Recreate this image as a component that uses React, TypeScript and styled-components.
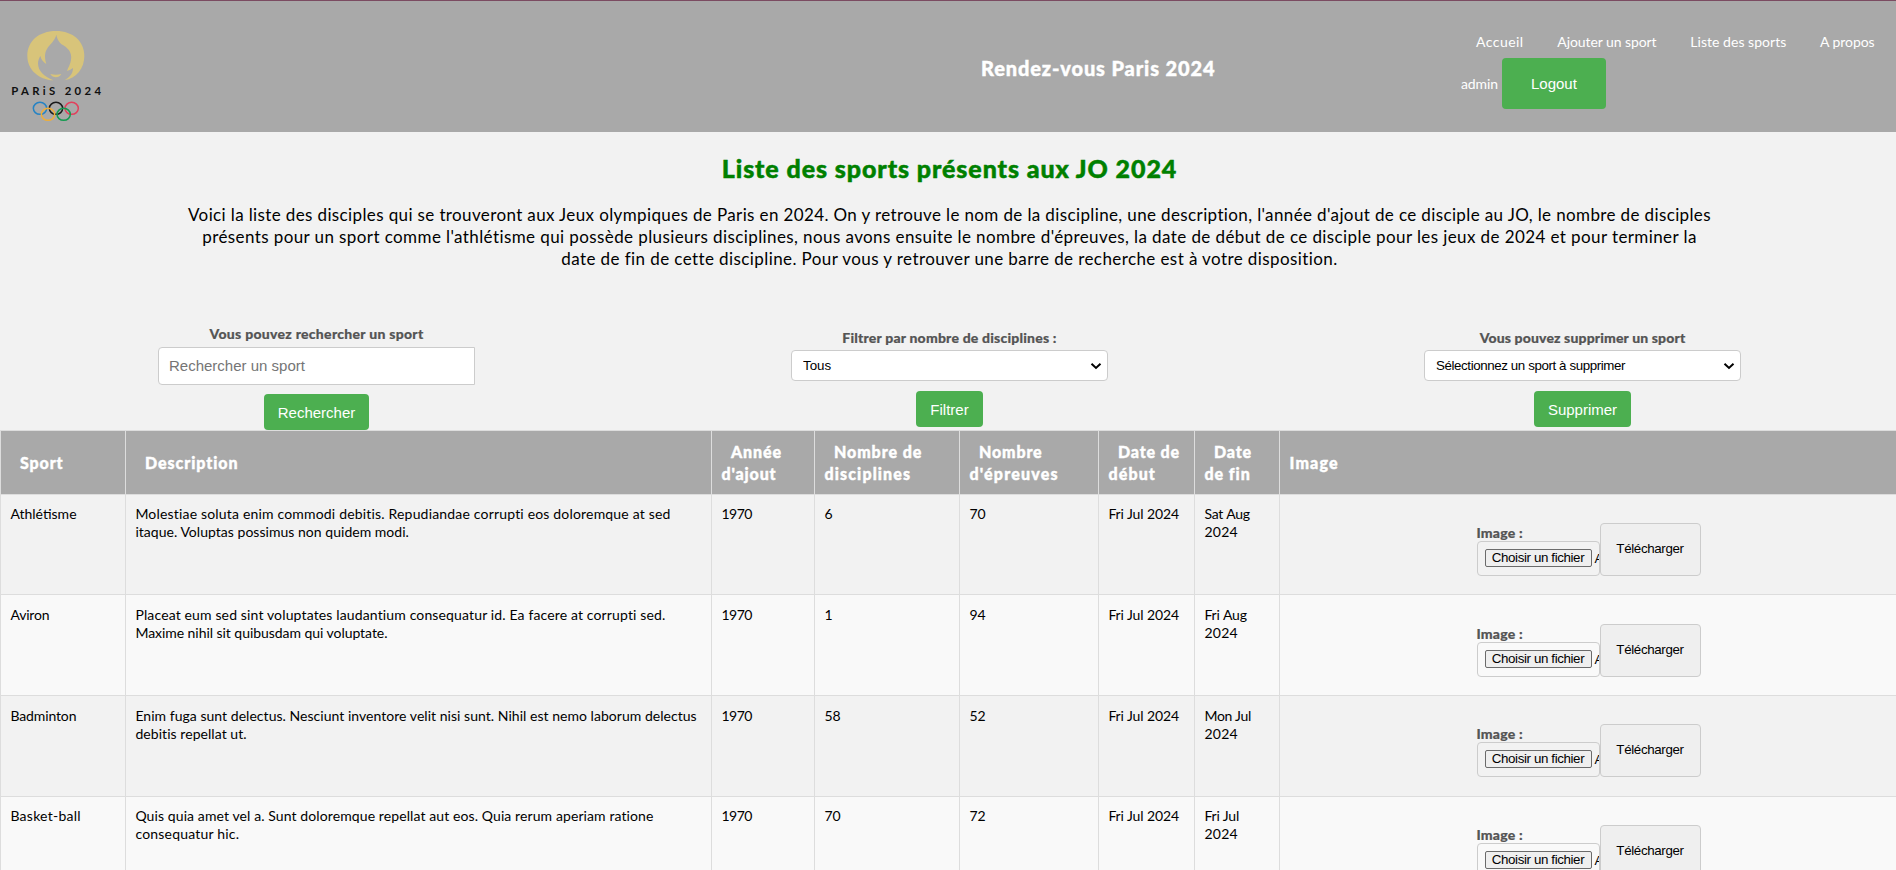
import React from "react";
import styled, { createGlobalStyle } from "styled-components";

const GlobalStyle = createGlobalStyle`
  *, *::before, *::after { box-sizing: border-box; }
  html, body { margin: 0; height: 870px; overflow: hidden; }
  body {
    background: #f2f2f2;
    color: #000;
    font-family: "Lato", "Open Sans", sans-serif;
    font-size: 14px;
    line-height: 18px;
  }
  button, input, select { font-family: Arial, "Liberation Sans", sans-serif; }
`;

const Text = styled.span<{ $ls?: number }>`
  letter-spacing: ${(p) => p.$ls ?? 0}px;
  white-space: nowrap;
`;

const Page = styled.div`
  width: 1899px;
  height: 870px;
  overflow: hidden;
`;

const Header = styled.header`
  display: grid;
  grid-template-columns: 981px 480px 1fr;
  height: 132px;
  background: #a9a9a9;
  border-top: 1px solid #7b4b61;
  color: #fff;
`;

const Logo = styled.svg`
  display: block;
  width: 130px;
  height: 131px;
`;

const Brand = styled.div`
  padding-top: 54px;
  font-size: 20px;
  font-weight: 900;
  line-height: 26px;
  -webkit-text-stroke: 0.4px currentColor;
`;

const Nav = styled.nav`
  padding-top: 32px;
`;

const NavLinks = styled.div`
  display: flex;
  gap: 33.8px;
  padding-left: 15px;
`;

const UserRow = styled.div`
  display: flex;
  align-items: center;
  gap: 4px;
  margin-top: 7px;
`;

const GreenButton = styled.button<{ $large?: boolean }>`
  height: ${(p) => (p.$large ? "51px" : "36px")};
  padding: 0 ${(p) => (p.$large ? "29px" : "14px")};
  border: 0;
  border-radius: 4px;
  background: #4caf50;
  color: #fff;
  font-size: 15px;
`;

const Title = styled.h1`
  margin: 21px 0;
  color: green;
  font-size: 25px;
  font-weight: 900;
  line-height: 30px;
  text-align: center;
  -webkit-text-stroke: 0.5px currentColor;
`;

const Intro = styled.p`
  display: flex;
  flex-direction: column;
  align-items: center;
  margin: 0;
  font-size: 17px;
  line-height: 22px;
`;

const Forms = styled.section`
  display: grid;
  grid-template-columns: repeat(3, 1fr);
  height: 160px;
`;

const Form = styled.div<{ $top: number }>`
  display: flex;
  flex-direction: column;
  align-items: center;
  padding-top: ${(p) => p.$top}px;
`;

const Label = styled.label`
  display: block;
  color: #555;
  font-size: 14px;
  font-weight: 900;
  -webkit-text-stroke: 0.2px currentColor;
`;

const SearchInput = styled.input`
  width: 317px;
  height: 38px;
  margin: 4px 0 9px;
  padding: 0 10px 2px;
  border: 1px solid #ccc;
  border-radius: 4px 0 0 4px;
  background: #fff;
  font-size: 15px;
  &::placeholder { color: #757575; }
`;

const SelectBox = styled.div`
  display: grid;
  align-items: center;
  width: 317px;
  margin: 3px 0 10px;
`;

const Select = styled.select<{ $ls?: number }>`
  grid-area: 1 / 1;
  width: 317px;
  height: 31px;
  padding: 0 24px 0 11px;
  appearance: none;
  border: 1px solid #ccc;
  border-radius: 4px;
  background: #fff;
  color: #000;
  font-size: 13.333px;
  letter-spacing: ${(p) => p.$ls ?? 0}px;
`;

const Chevron = styled.svg`
  grid-area: 1 / 1;
  justify-self: end;
  width: 12px;
  height: 8px;
  margin-right: 6px;
  pointer-events: none;
`;

const Table = styled.table`
  width: 1899px;
  table-layout: fixed;
  border-collapse: collapse;
`;

const HeadRow = styled.tr`
  height: 64px;
  background: #a9a9a9;
  color: #fff;
`;

const HeadCell = styled.th<{ $indent?: number }>`
  padding: 0 0 0 9.5px;
  border: 1px solid #ddd;
  font-size: 16px;
  font-weight: 900;
  line-height: 22px;
  text-align: left;
  text-indent: ${(p) => p.$indent ?? 9.5}px;
  -webkit-text-stroke: 0.4px currentColor;
`;

const Row = styled.tr<{ $height: number }>`
  height: ${(p) => p.$height}px;
  &:nth-child(even) { background: #f9f9f9; }
`;

const Cell = styled.td<{ $top: number }>`
  padding: ${(p) => p.$top}px 0 0 9.4px;
  border: 1px solid #ddd;
  vertical-align: top;
`;

const ImageCell = styled(Cell)`
  padding: ${(p) => p.$top}px 2px 0 0;
`;

const Upload = styled.div`
  display: flex;
  justify-content: center;
`;

const UploadField = styled.div`
  width: 123px;
`;

const UploadLabel = styled(Label)`
  height: 18px;
  line-height: 20px;
`;

const FileBox = styled.div`
  display: flex;
  align-items: center;
  gap: 3px;
  height: 35px;
  padding: 0 0 1px 7px;
  overflow: hidden;
  border: 1px solid #ccc;
  border-radius: 4px;
  font: 13.333px Arial, "Liberation Sans", sans-serif;
  white-space: nowrap;
`;

const FileButton = styled.button`
  flex: none;
  width: 107px;
  height: 18px;
  padding: 0;
  border: 1px solid #6b6b6b;
  border-radius: 2px;
  background: #efefef;
  color: #000;
  font-size: 13.333px;
  letter-spacing: -0.38px;
  line-height: 16px;
`;

const UploadButton = styled.button`
  width: 101px;
  height: 53px;
  padding: 0 0 2px;
  border: 1px solid #ccc;
  border-radius: 4px;
  background: #efefef;
  color: #000;
  font-size: 13.333px;
  letter-spacing: -0.35px;
`;

type Str = [string, number];

const INTRO: Str[] = [
  ["Voici la liste des disciples qui se trouveront aux Jeux olympiques de Paris en 2024. On y retrouve le nom de la discipline, une description, l'année d'ajout de ce disciple au JO, le nombre de disciples", 0.375],
  ["présents pour un sport comme l'athlétisme qui possède plusieurs disciplines, nous avons ensuite le nombre d'épreuves, la date de début de ce disciple pour les jeux de 2024 et pour terminer la", 0.405],
  ["date de fin de cette discipline. Pour vous y retrouver une barre de recherche est à votre disposition.", 0.41],
];

const LINKS: Str[] = [
  ["Accueil", 0.45],
  ["Ajouter un sport", -0.08],
  ["Liste des sports", 0.03],
  ["A propos", -0.063],
];

const COLUMNS: { width: number; lines: Str[]; indent?: number }[] = [
  { width: 125, lines: [["Sport", 0.876]] },
  { width: 586, lines: [["Description", 0.93]] },
  { width: 103, lines: [["Année", 0.896], ["d'ajout", 0.854]] },
  { width: 145, lines: [["Nombre de", 0.92], ["disciplines", 1.12]] },
  { width: 139, lines: [["Nombre", 0.847], ["d'épreuves", 1.2]] },
  { width: 96, lines: [["Date de", 0.841], ["début", 1.11]] },
  { width: 85, lines: [["Date", 0.84], ["de fin", 0.936]] },
  { width: 620, lines: [["Image", 1.2]], indent: 0 },
];

interface Sport {
  height: number;
  textTop: number;
  uploadTop: number;
  name: Str;
  description: Str[];
  disciplines: string;
  events: string;
  end: Str;
}

const SPORTS: Sport[] = [
  {
    height: 100, textTop: 10, uploadTop: 28,
    name: ["Athlétisme", 0], disciplines: "6", events: "70", end: ["Sat Aug", -0.19],
    description: [["Molestiae soluta enim commodi debitis. Repudiandae corrupti eos doloremque at sed", 0.18], ["itaque. Voluptas possimus non quidem modi.", 0.03]],
  },
  {
    height: 101, textTop: 11, uploadTop: 29,
    name: ["Aviron", -0.177], disciplines: "1", events: "94", end: ["Fri Aug", -0.1],
    description: [["Placeat eum sed sint voluptates laudantium consequatur id. Ea facere at corrupti sed.", 0.14], ["Maxime nihil sit quibusdam qui voluptate.", -0.05]],
  },
  {
    height: 101, textTop: 11, uploadTop: 28,
    name: ["Badminton", -0.118], disciplines: "58", events: "52", end: ["Mon Jul", -0.278],
    description: [["Enim fuga sunt delectus. Nesciunt inventore velit nisi sunt. Nihil est nemo laborum delectus", 0.035], ["debitis repellat ut.", 0.058]],
  },
  {
    height: 101, textTop: 10, uploadTop: 28,
    name: ["Basket-ball", 0.26], disciplines: "70", events: "72", end: ["Fri Jul", -0.15],
    description: [["Quis quia amet vel a. Sunt doloremque repellat aut eos. Quia rerum aperiam ratione", 0.1], ["consequatur hic.", 0.2]],
  },
];

function Lines({ lines }: { lines: Str[] }) {
  return (
    <>
      {lines.map(([text, ls], i) => (
        <React.Fragment key={text}>
          {i > 0 && <br />}
          <Text $ls={ls}>{text}</Text>
        </React.Fragment>
      ))}
    </>
  );
}

function Dropdown({ option, ls }: { option: string; ls?: number }) {
  return (
    <SelectBox>
      <Select $ls={ls}>
        <option>{option}</option>
      </Select>
      <Chevron viewBox="0 0 12 8">
        <path d="M1.5 1.8L6 6L10.5 1.8" fill="none" stroke="#000" strokeWidth="2" />
      </Chevron>
    </SelectBox>
  );
}

function ParisLogo() {
  return (
    <Logo viewBox="0 3 390 393">
      <path
        fill="#d8c47a"
        d="M168 93C115 93 82 125 82 167C82 210 116 238 160 241C132 229 114 214 114 190C114 181 118 173 121 168C124 180 130 187 139 192C132 168 134 153 149 136C160 124 167 114 169 104C172 120 178 128 190 136C209 148 216 162 213 180C211 195 204 203 201 213C208 211 214 208 219 204C219 222 207 234 192 241C230 235 253 205 253 167C253 125 220 93 168 93Z"
      />
      <path fill="#d8c47a" d="M151 222Q168 226 184 222Q178 232 168 232Q157 232 151 222Z" />
      <text x="34" y="286" fontSize="34" fontWeight="700" fontFamily="Lato, sans-serif" textLength="269" fill="#111">
        PARiS 2024
      </text>
      <g fill="none" strokeWidth="4.5">
        <ellipse cx="120" cy="325" rx="20" ry="18" stroke="#2583c4" />
        <ellipse cx="168" cy="325" rx="20" ry="18" stroke="#1b1b1b" />
        <ellipse cx="215" cy="325" rx="20" ry="18" stroke="#e2405c" />
        <ellipse cx="144" cy="343" rx="20" ry="18" stroke="#eeae3a" />
        <ellipse cx="191" cy="343" rx="20" ry="18" stroke="#149b50" />
      </g>
    </Logo>
  );
}

export default function App() {
  return (
    <Page>
      <GlobalStyle />
      <Header>
        <ParisLogo />
        <Brand>
          <Text $ls={0.87}>Rendez-vous Paris 2024</Text>
        </Brand>
        <Nav>
          <NavLinks>
            {LINKS.map(([text, ls]) => (
              <Text key={text} $ls={ls}>{text}</Text>
            ))}
          </NavLinks>
          <UserRow>
            <Text $ls={-0.1}>admin</Text>
            <GreenButton $large>Logout</GreenButton>
          </UserRow>
        </Nav>
      </Header>

      <Title>
        <Text $ls={0.91}>Liste des sports présents aux JO 2024</Text>
      </Title>
      <Intro>
        {INTRO.map(([text, ls]) => (
          <Text key={text} $ls={ls}>{text}</Text>
        ))}
      </Intro>

      <Forms>
        <Form $top={55}>
          <Label><Text $ls={0.28}>Vous pouvez rechercher un sport</Text></Label>
          <SearchInput placeholder="Rechercher un sport" />
          <GreenButton>Rechercher</GreenButton>
        </Form>
        <Form $top={59}>
          <Label><Text $ls={0.2}>Filtrer par nombre de disciplines :</Text></Label>
          <Dropdown option="Tous" />
          <GreenButton>Filtrer</GreenButton>
        </Form>
        <Form $top={59}>
          <Label><Text $ls={0.14}>Vous pouvez supprimer un sport</Text></Label>
          <Dropdown option="Sélectionnez un sport à supprimer" ls={-0.4} />
          <GreenButton>Supprimer</GreenButton>
        </Form>
      </Forms>

      <Table>
        <colgroup>
          {COLUMNS.map((c) => <col key={c.width} width={c.width} />)}
        </colgroup>
        <thead>
          <HeadRow>
            {COLUMNS.map((c) => (
              <HeadCell key={c.width} $indent={c.indent}><Lines lines={c.lines} /></HeadCell>
            ))}
          </HeadRow>
        </thead>
        <tbody>
          {SPORTS.map((s) => (
            <Row key={s.name[0]} $height={s.height}>
              <Cell $top={s.textTop}><Lines lines={[s.name]} /></Cell>
              <Cell $top={s.textTop}><Lines lines={s.description} /></Cell>
              <Cell $top={s.textTop}><Text $ls={-0.5}>1970</Text></Cell>
              <Cell $top={s.textTop}>{s.disciplines}</Cell>
              <Cell $top={s.textTop}>{s.events}</Cell>
              <Cell $top={s.textTop}><Text $ls={-0.1}>Fri Jul 2024</Text></Cell>
              <Cell $top={s.textTop}><Lines lines={[s.end, ["2024", 0.255]]} /></Cell>
              <ImageCell $top={s.uploadTop}>
                <Upload>
                  <UploadField>
                    <UploadLabel><Text $ls={0.2}>Image :</Text></UploadLabel>
                    <FileBox>
                      <FileButton>Choisir un fichier</FileButton>
                      A
                    </FileBox>
                  </UploadField>
                  <UploadButton>Télécharger</UploadButton>
                </Upload>
              </ImageCell>
            </Row>
          ))}
        </tbody>
      </Table>
    </Page>
  );
}
